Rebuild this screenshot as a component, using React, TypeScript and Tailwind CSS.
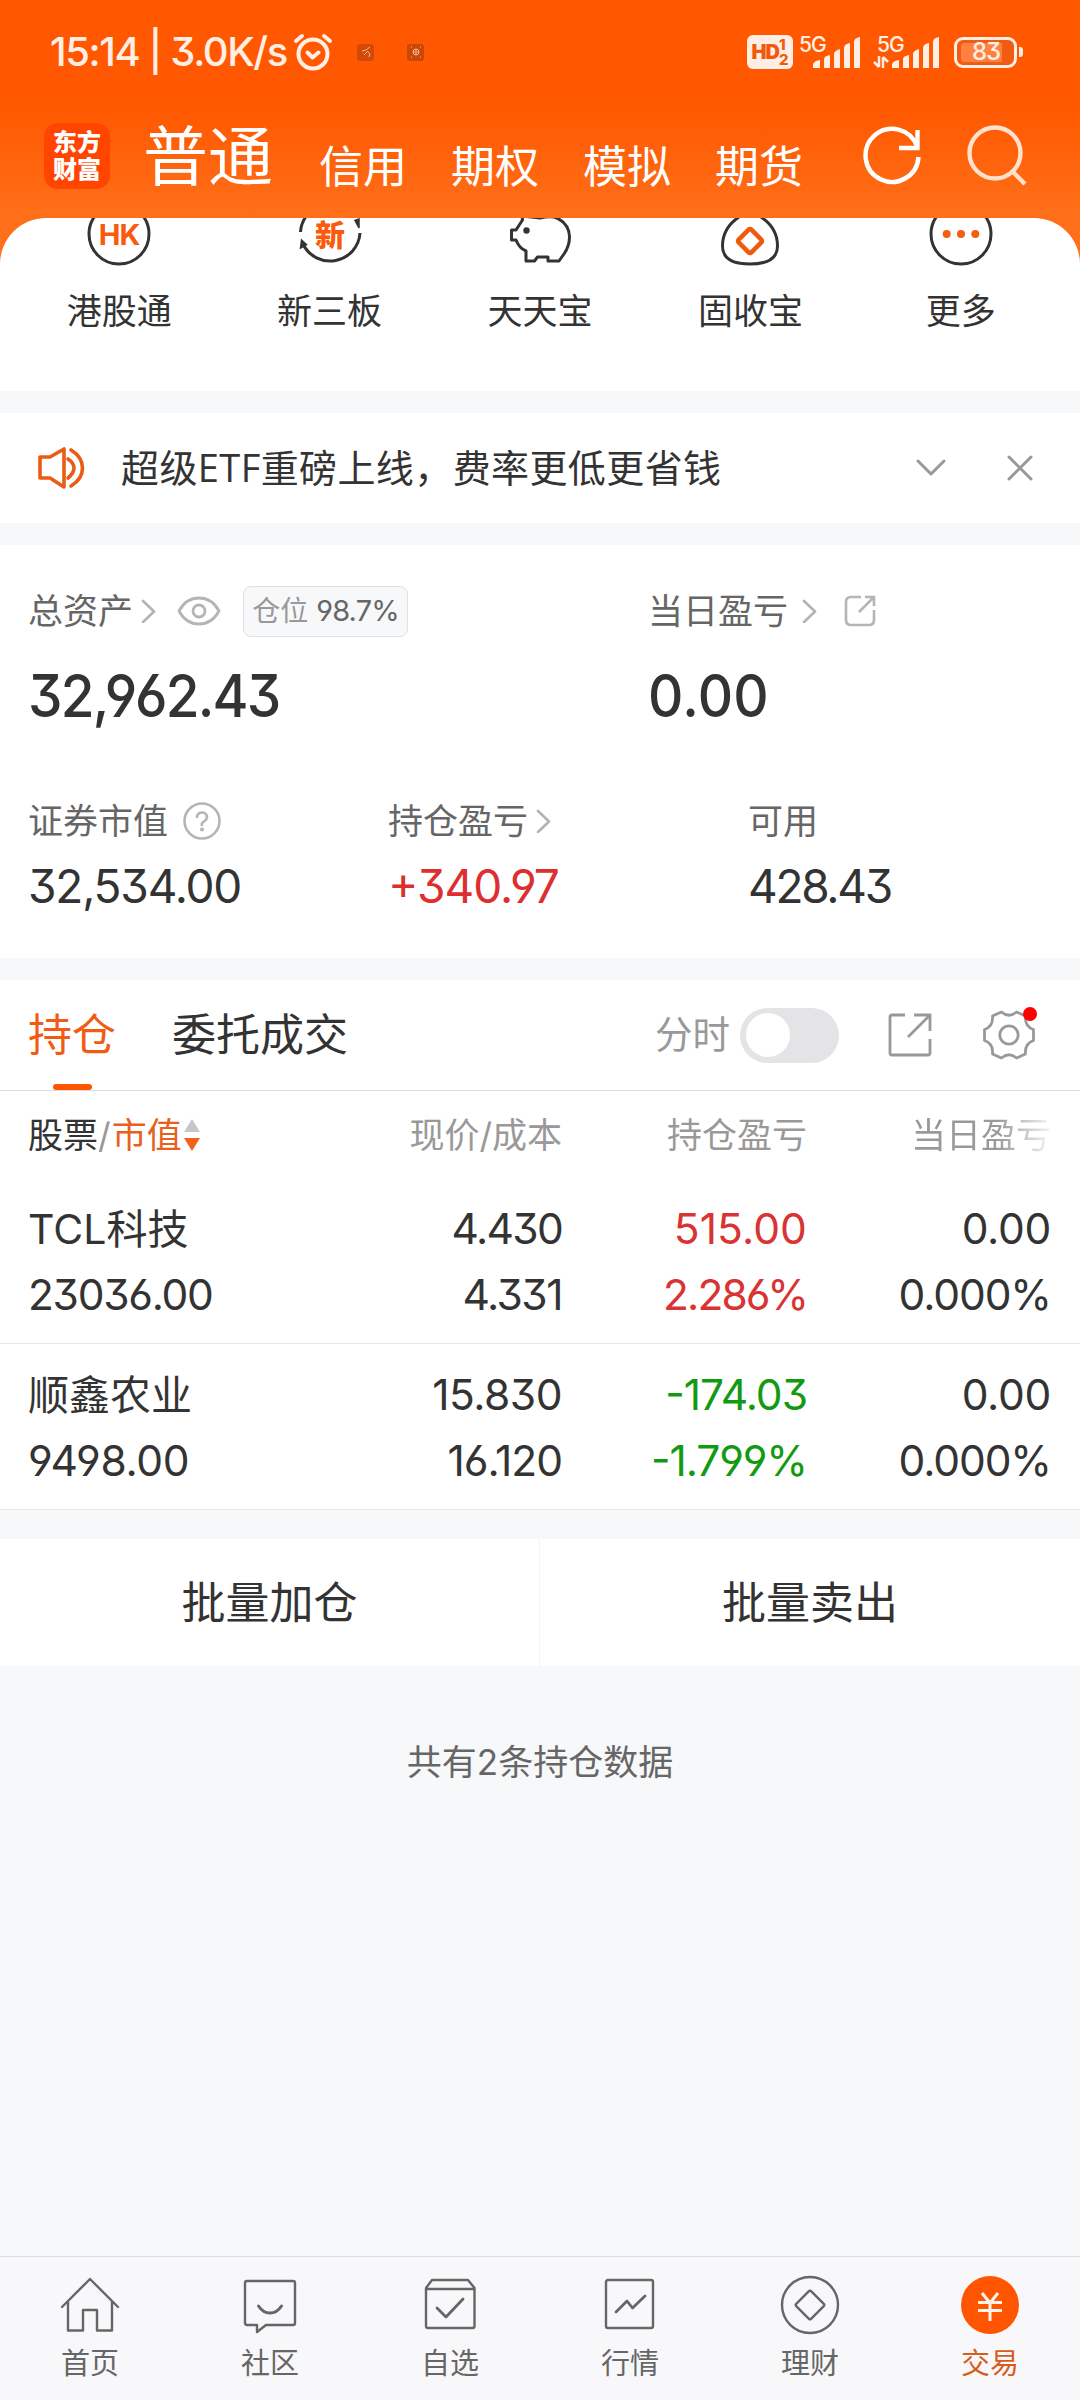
import type { ReactNode } from "react";

const CJK = "font-['Inter','Noto_Sans_CJK_SC',sans-serif]";

/* ---------- status bar ---------- */

function Signal() {
  return (
    <svg width="48" height="32" viewBox="0 0 48 32" fill="#ffeee3">
      <path d="M0 31v-3q0-4 7-5v8zM11 31V22q0-3 6-4v13zM21 31V17q0-3 6-5v19zM31 31V11q0-4 6-5v25zM41 31V5q0-4 6-5v31z" />
    </svg>
  );
}

function StatusBar() {
  return (
    <div className="flex h-[104px] items-center pl-[50px] pr-[57px] text-[#ffeee3]">
      <span className="w-[243px] whitespace-nowrap text-[40px] font-medium leading-none tracking-[-1.4px] [font-feature-settings:'cv09']">15:14 | 3.0K/s</span>
      <svg width="40" height="38" viewBox="0 0 40 38" fill="none" stroke="#ffeee3" strokeWidth="4" strokeLinecap="round" strokeLinejoin="round">
        <circle cx="20" cy="21" r="14.500" />
        <path d="M3 8 9 3M37 8 31 3M14.500 19.500 19.500 24.500 25.500 19.500" />
      </svg>
      <div className="ml-[24px] flex size-[17px] items-center justify-center rounded-[3px] bg-[#d24a08]">
        <svg width="12" height="12" viewBox="0 0 12 12" fill="none" stroke="#f3b68c" strokeWidth="1"><path d="M2 5 6 4 10 1M4 9 8 5M8 6 10 8 9 11" /></svg>
      </div>
      <div className="ml-[33px] flex size-[17px] items-center justify-center rounded-[3px] bg-[#c94807]">
        <svg width="12" height="12" viewBox="0 0 12 12" fill="none" stroke="#f3b68c" strokeWidth="1"><path d="M6 3v6M3 6h6" /><circle cx="6" cy="6" r="3" /><path d="M1 1h1M10 1h1M1 11h1M10 11h1" /></svg>
      </div>
      <div className="ml-auto flex h-[34px] w-[46px] items-center justify-center rounded-[6px] bg-[#ffeee3] text-[#f05a0a]">
        <span className="text-[20px] font-black leading-none tracking-[-1px]">HD</span>
        <span className="flex flex-col text-[15px] font-extrabold leading-[15px]"><span>1</span><span>2</span></span>
      </div>
      <div className="relative ml-[20px] h-[34px] w-[49px] pt-[2px]">
        <span className="absolute -left-[14px] -top-px text-[21px] font-medium leading-none tracking-[-1px]">5G</span>
        <Signal />
      </div>
      <div className="relative ml-[30px] h-[34px] w-[49px] pt-[2px]">
        <span className="absolute -left-[15px] -top-px text-[21px] font-medium leading-none tracking-[-1px]">5G</span>
        <svg className="absolute -left-[19px] top-[21px]" width="16" height="12" viewBox="0 0 16 12" fill="none" stroke="#ffeee3" strokeWidth="2.500"><path d="M6 0v11M1 6l5 5M10 12V1M15 6l-5-5" /></svg>
        <Signal />
      </div>
      <div className="ml-[13px] flex items-center gap-[2px]">
        <div className="flex h-[31px] w-[63px] items-center rounded-[9px] border-[3px] border-[#ffeee3] bg-[#f05c14] px-[4px]">
          <div className="flex h-[19px] w-[41px] items-center justify-center rounded-l-[4px] bg-[#ff8140] pl-[9px] text-[24px] font-medium leading-none tracking-[-1px] [font-feature-settings:'cv09']">83</div>
        </div>
        <div className="h-[10px] w-[4px] rounded-r-[3px] bg-[#ffeee3]" />
      </div>
    </div>
  );
}

/* ---------- header ---------- */

function Header() {
  return (
    <header className="h-[262px] bg-[linear-gradient(180deg,#ff5800_0px,#ff5800_106px,#ff6e18_212px,#ff6e18_262px)]">
      <StatusBar />
      <div className="flex h-[114px] items-start pl-[44px] text-white">
        <div className="mt-[19px] flex size-[66px] flex-col items-center justify-center rounded-[14px] bg-[#ff4500] text-[24px] font-black leading-[27px]">
          <span>东方</span>
          <span>财富</span>
        </div>
        <span className="ml-[33px] mt-[20px] text-[65px] leading-[65px]">普通</span>
        <nav className="ml-[46px] mt-[41px] flex gap-[44px] text-[44px] leading-[44px]">
          {["信用", "期权", "模拟", "期货"].map((t) => (
            <span key={t}>{t}</span>
          ))}
        </nav>
        <svg className="ml-[59px] mt-[22px]" width="60" height="60" viewBox="0 0 60 60" fill="none" stroke="#fff" strokeWidth="4.400">
          <path d="M55 20.500A26.500 26.500 0 1 0 56.500 31" />
          <path d="M55.500 4V22H37" />
        </svg>
        <svg className="ml-[45px] mt-[21px] text-[#ffe1cc]" width="62" height="64" viewBox="0 0 62 64" fill="none" stroke="currentColor" strokeWidth="4.400">
          <circle cx="28" cy="28" r="25.500" />
          <path d="M45 46 58 59" />
        </svg>
      </div>
    </header>
  );
}

/* ---------- shortcuts ---------- */

function ShortcutIcon({ name }: { name: string }) {
  const s = { width: 64, height: 64, viewBox: "0 0 64 64", fill: "none", stroke: "#333", strokeWidth: 3 };
  if (name === "港股通")
    return (
      <svg {...s}>
        <circle cx="32" cy="32" r="30" />
        <text x="32" y="43" textAnchor="middle" fontSize="29" fontWeight="700" fill="#fa5a0c" stroke="none" letterSpacing="-1">HK</text>
      </svg>
    );
  if (name === "新三板")
    return (
      <svg {...s}>
        <path d="M2.500 30A30 30 0 0 1 32 2M62 31A30 30 0 0 1 5 42" />
        <path d="M3.500 38 2.500 46 8.500 42.500zM61 26 57 18.500 61 17z" fill="#333" strokeWidth="1.500" />
        <text x="32" y="43.500" textAnchor="middle" fontSize="30" fontWeight="900" fill="#fa5a0c" stroke="none">新</text>
      </svg>
    );
  if (name === "天天宝")
    return (
      <svg {...s} strokeLinejoin="round">
        <path d="M14 14 14.500 18 8 28H3.500V38H8Q11 46 18 49V59H26.500L29.500 55H40V59H51L56 52Q61.500 44 61.500 35Q61 20 46 15Q40 14 32 16Z" />
        <circle cx="18.500" cy="28.500" r="3.200" fill="#333" stroke="none" />
      </svg>
    );
  if (name === "固收宝")
    return (
      <svg {...s}>
        <path d="M21 15Q4.500 26 4.500 44Q4.500 62 32 62Q59.500 62 59.500 44Q59.500 26 43 15" />
        <rect x="23" y="30" width="18" height="18" rx="2" transform="rotate(45 32 39)" stroke="#f05a0c" strokeWidth="4.600" />
      </svg>
    );
  return (
    <svg {...s}>
      <circle cx="32" cy="32" r="30" />
      <g fill="#f2600f" stroke="none">
        <circle cx="17.700" cy="32" r="4" />
        <circle cx="32" cy="32" r="4" />
        <circle cx="46.300" cy="32" r="4" />
      </g>
    </svg>
  );
}

function Shortcuts() {
  return (
    <section className="relative z-10 -mt-[44px] h-[173px] overflow-hidden rounded-t-[46px] bg-white px-[14px]">
      <div className="-mt-[16px] grid grid-cols-5">
        {["港股通", "新三板", "天天宝", "固收宝", "更多"].map((n) => (
          <div key={n} className="flex flex-col items-center">
            <ShortcutIcon name={n} />
            <span className="mt-[27px] text-[35px] leading-[36px] text-[#333]">{n}</span>
          </div>
        ))}
      </div>
    </section>
  );
}

/* ---------- notice ---------- */

function Notice() {
  return (
    <section className="mt-[22px] flex h-[110px] items-center bg-white pl-[36px] pr-[46px]">
      <svg width="50" height="44" viewBox="0 0 50 44" fill="none" stroke="#ea5c14" strokeWidth="3.600" strokeLinejoin="round" strokeLinecap="round">
        <path d="M4 11H14L28 3V41L14 32H4Z" />
        <path d="M32 13Q38 17 38 22T32 32M35 4Q46.500 11 46.500 22T35 40" />
      </svg>
      <span className="-mt-[2px] ml-[35px] text-[38px] leading-[44px] tracking-[0.4px] text-[#333]">超级<span className="font-['Open_Sans']">ETF</span>重磅上线，费率更低更省钱</span>
      <svg className="ml-auto" width="30" height="18" viewBox="0 0 30 18" fill="none" stroke="#999" strokeWidth="3" strokeLinecap="round" strokeLinejoin="round"><path d="M2 2 15 15 28 2" /></svg>
      <svg className="ml-[60px]" width="28" height="28" viewBox="0 0 28 28" fill="none" stroke="#999" strokeWidth="3" strokeLinecap="round"><path d="M3 3 25 25M25 3 3 25" /></svg>
    </section>
  );
}

/* ---------- assets ---------- */

function Chevron({ className = "" }: { className?: string }) {
  return (
    <svg className={className} width="16" height="24" viewBox="0 0 16 24" fill="none" stroke="#b3b3b3" strokeWidth="2.600" strokeLinecap="round" strokeLinejoin="round">
      <path d="M2 2 13 12.500 2 23" />
    </svg>
  );
}

function Label({ children }: { children: ReactNode }) {
  return <div className="flex h-[50px] items-center text-[35px] leading-[50px] text-[#666]">{children}</div>;
}

const NUM = "whitespace-nowrap [font-feature-settings:'cv03','cv04','cv09','case']";
const BIG = `${NUM} mt-[16px] mb-[3px] origin-left scale-x-[0.93] text-[59px] font-medium leading-[88px] text-[#333]`;
const MID = `${NUM} mt-[10px] text-[46px] leading-[60px]`;

function Assets() {
  return (
    <section className="mt-[22px] h-[413px] bg-white pl-[28px] pt-[41px]">
      <div className="flex">
        <div className="w-[620px]">
          <Label>
            总资产
            <Chevron className="ml-[8px]" />
            <svg className="ml-[20px]" width="44" height="30" viewBox="0 0 44 30" fill="none" stroke="#b5b5b5" strokeWidth="2.800">
              <path d="M2 15Q9 2 22 2T42 15Q35 28 22 28T2 15Z" strokeLinejoin="round" />
              <circle cx="22" cy="15" r="6" />
            </svg>
            <div className="ml-[22px] flex h-[51px] w-[165px] items-center justify-center gap-[8px] rounded-[8px] border border-[#e0e0e2] bg-[#f7f8fa] text-[28px] text-[#999]">
              仓位
              <span className={`${NUM} text-[29px] tracking-[-0.9px] text-[#666]`}>98.7%</span>
            </div>
          </Label>
          <div className={`${BIG} tracking-[-1.9px]`}>32,962.43</div>
        </div>
        <div>
          <Label>
            当日盈亏
            <Chevron className="ml-[14px]" />
            <svg className="ml-[25px]" width="34" height="34" viewBox="0 0 34 34" fill="none" stroke="#b5b5b5" strokeWidth="2.600">
              <path d="M18 3H8Q3 3 3 8V26Q3 31 8 31H26Q31 31 31 26V16" />
              <path d="M22 3H31V12M31 3 16 18" />
            </svg>
          </Label>
          <div className={`${BIG} tracking-[0.3px]`}>0.00</div>
        </div>
      </div>
      <div className="mt-[53px] grid grid-cols-[360px_360px_1fr]">
        <div>
          <Label>
            证券市值
            <svg className="ml-[14px]" width="40" height="40" viewBox="0 0 40 40" fill="none" stroke="#b5b5b5" strokeWidth="2.600" strokeLinecap="round">
              <circle cx="20" cy="20" r="17.500" />
              <path d="M15 16Q15.500 11.500 20 11.500T25 16Q25 18.500 22 20.500T20 24" />
              <circle cx="20" cy="28.500" r="0.800" fill="#b5b5b5" />
            </svg>
          </Label>
          <div className={`${MID} tracking-[-1.2px] text-[#333]`}>32,534.00</div>
        </div>
        <div>
          <Label>
            持仓盈亏
            <Chevron className="ml-[8px]" />
          </Label>
          <div className={`${MID} tracking-[-1px] text-[#dd2f2f]`}>+340.97</div>
        </div>
        <div>
          <Label>可用</Label>
          <div className={`${MID} tracking-[-2.3px] text-[#333]`}>428.43</div>
        </div>
      </div>
    </section>
  );
}

/* ---------- holdings ---------- */

function Tabs() {
  return (
    <div className="flex h-[111px] items-center border-b border-[#ddd] pl-[28px] pr-[44px]">
      <div className="relative flex h-full items-center text-[44px] leading-[44px] text-[#f05c14]">
        持仓
        <span className="absolute bottom-0 left-[25px] h-[6px] w-[39px] rounded-full bg-[#ff5500]" />
      </div>
      <span className="ml-[56px] text-[44px] leading-[44px] text-[#333]">委托成交</span>
      <span className="ml-auto text-[37.5px] leading-[44px] text-[#999]">分时</span>
      <div className="ml-[10px] flex h-[55px] w-[99px] items-center rounded-full bg-[#e4e4e6] pl-[6px]">
        <div className="size-[44px] rounded-full bg-white" />
      </div>
      <svg className="ml-[48px]" width="46" height="46" viewBox="0 0 46 46" fill="none" stroke="#999" strokeWidth="2.800">
        <path d="M18 3H5Q3 3 3 5V41Q3 43 5 43H41Q43 43 43 41V27" />
        <path d="M27 3H43V19M43 3 21 25" />
      </svg>
      <div className="relative ml-[49px] size-[54px]">
        <svg width="54" height="54" viewBox="-27 -27 54 54" fill="none" stroke="#999" strokeWidth="2.800" strokeLinejoin="round">
          <circle r="9.200" />
          <path d="M-16.500 -19L-7.600 -23Q0 -16.500 7.600 -23L16.500 -19Q15.500 -8.500 24.500 -5.500V5.500Q15.500 8.500 16.500 19L7.600 23Q0 16.500 -7.600 23L-16.500 19Q-15.500 8.500 -24.500 5.500V-5.500Q-15.500 -8.500 -16.500 -19Z" />
        </svg>
        <span className="absolute -top-px left-[41px] size-[14px] rounded-full bg-[#ff0000]" />
      </div>
    </div>
  );
}

type Cell = [string, string];
const ROWS: { name: string; value: Cell; cols: [Cell, Cell][]; tone: string }[] = [
  {
    name: "TCL科技",
    value: ["23036.00", "tracking-[-1.3px]"],
    cols: [
      [["4.430", "tracking-[-1.7px]"], ["4.331", "tracking-[-1.5px]"]],
      [["515.00", "tracking-[0.1px]"], ["2.286%", "tracking-[-1.9px]"]],
      [["0.00", "tracking-[-0.3px]"], ["0.000%", "tracking-[-1.1px]"]],
    ],
    tone: "text-[#d93333]",
  },
  {
    name: "顺鑫农业",
    value: ["9498.00", "tracking-[-0.3px]"],
    cols: [
      [["15.830", "tracking-[-0.5px]"], ["16.120", "tracking-[-1px]"]],
      [["-174.03", "tracking-[-1px]"], ["-1.799%", "tracking-[-1.1px]"]],
      [["0.00", "tracking-[-0.3px]"], ["0.000%", "tracking-[-1.1px]"]],
    ],
    tone: "text-[#139a13]",
  },
];

function Holdings() {
  return (
    <section className="mt-[22px] bg-white">
      <Tabs />
      <div className="grid h-[87px] grid-cols-[290px_244px_245px_244px] items-center pl-[28px] text-[35px] leading-[36px] text-[#999]">
        <div className="flex items-center">
          <span className="text-[#333]">股票</span>/<span className="ml-px text-[#e8601c]">市值</span>
          <svg className="ml-[2px]" width="16" height="32" viewBox="0 0 16 32">
            <path d="M8 0 16 13H0Z" fill="#c8c8c8" />
            <path d="M8 32 0 19H16Z" fill="#f4611a" />
          </svg>
        </div>
        <span className="text-right">现价/成本</span>
        <span className="text-right">持仓盈亏</span>
        <span className="bg-[linear-gradient(90deg,#999_190px,#fff_250px)] bg-clip-text text-right text-transparent">当日盈亏</span>
      </div>
      {ROWS.map((r) => (
        <div key={r.name} className="grid h-[166px] grid-cols-[290px_244px_245px_244px] border-b border-[#e8e8e9] pl-[28px] pt-[18px] text-[42.5px] leading-[66px] text-[#333]">
          <div>
            <div className="text-[41px]">{r.name}</div>
            <div className={`${NUM} ${r.value[1]}`}>{r.value[0]}</div>
          </div>
          {r.cols.map((c, j) => (
            <div key={j} className={`text-right ${j === 1 ? r.tone : ""}`}>
              {c.map((x, k) => (
                <div key={k} className={`${NUM} ${x[1]}`}>{x[0]}</div>
              ))}
            </div>
          ))}
        </div>
      ))}
    </section>
  );
}

/* ---------- bottom navigation ---------- */

function NavIcon({ name }: { name: string }) {
  const s = { width: 60, height: 62, viewBox: "0 0 60 62", fill: "none", stroke: "#666", strokeWidth: 2.4, strokeLinejoin: "round" as const, strokeLinecap: "round" as const };
  switch (name) {
    case "首页":
      return <svg {...s}><path d="M2 32 30 4 58 32M8 27V55.500H23V35H37V55.500H52V27" /></svg>;
    case "社区":
      return <svg {...s}><path d="M7 6H53Q55 6 55 8V48Q55 50 53 50H26L17 57V50H7Q5 50 5 48V8Q5 6 7 6Z" /><path d="M18.500 31Q23 38 30 38T41.500 31" strokeWidth="3" /></svg>;
    case "自选":
      return <svg {...s}><path d="M6 13 12 5H48L54.500 13V51Q54.500 53 52.500 53H8Q6 53 6 51ZM6 14H54" /><path d="M17 33 26 42 43 24" strokeWidth="2.800" /></svg>;
    case "行情":
      return <svg {...s}><rect x="6" y="5" width="47" height="48" rx="2" /><path d="M16 37 27 26 32.500 33 45 21" strokeWidth="2.800" /></svg>;
    case "理财":
      return <svg {...s}><circle cx="30" cy="30" r="28" /><rect x="19.500" y="19.500" width="21" height="21" rx="1.500" transform="rotate(45 30 30)" /></svg>;
    default:
      return <svg {...s}><circle cx="30" cy="30" r="29" fill="#ff5500" stroke="none" /><path d="M22 18 30 28 38 18M18 27.500H42M18 35.500H42M30 28V46" stroke="#fff3ea" strokeWidth="3" strokeLinecap="butt" /></svg>;
  }
}

function BottomNav() {
  return (
    <nav className="mt-auto grid h-[144px] grid-cols-6 border-t border-[#dcdde0] bg-[#f8f8fa]">
      {["首页", "社区", "自选", "行情", "理财", "交易"].map((n, i) => (
        <div key={n} className="flex flex-col items-center pt-[18px]">
          <NavIcon name={n} />
          <span className={`mt-[11px] text-[29px] leading-[32px] ${i === 5 ? "text-[#d95c1c]" : "text-[#666]"}`}>{n}</span>
        </div>
      ))}
    </nav>
  );
}

export default function App() {
  return (
    <div className={`flex h-[2400px] w-[1080px] flex-col overflow-hidden bg-[#f7f8fa] font-normal ${CJK}`}>
      <Header />
      <Shortcuts />
      <Notice />
      <Assets />
      <Holdings />
      <div className="mt-[29px] grid h-[127px] grid-cols-2 items-center bg-white text-center text-[44px] leading-[44px] text-[#333]">
        <span className="flex h-full items-center justify-center border-r border-[#f3f3f4]">批量加仓</span>
        <span>批量卖出</span>
      </div>
      <p className="mt-[78px] text-center text-[35px] leading-[36px] text-[#666]">共有2条持仓数据</p>
      <BottomNav />
    </div>
  );
}
